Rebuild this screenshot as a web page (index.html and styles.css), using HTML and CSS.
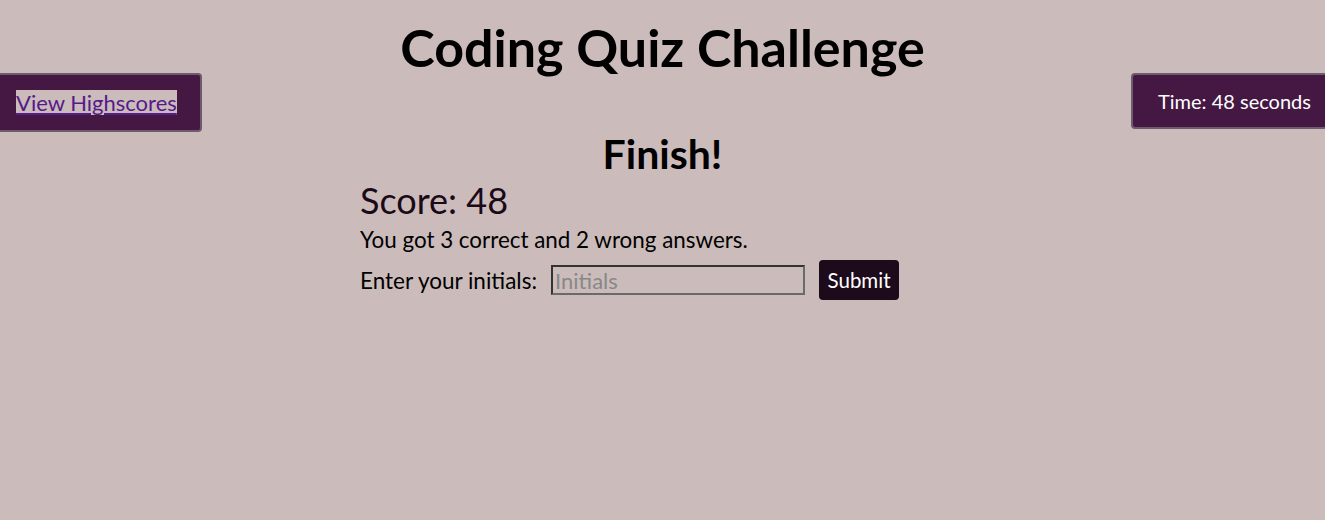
FILE: index.html
```html
<!DOCTYPE html>
<html>
<head>
<meta charset="utf-8">
<link rel="stylesheet" href="styles.css">
</head>
<body>
<h1 class="title">Coding Quiz Challenge</h1>
<div class="bar">
  <div class="scores-btn"><a href="#" class="scores-link">View Highscores</a></div>
  <div class="timer">Time: 48 seconds</div>
</div>
<main class="main">
  <h2 class="finish">Finish!</h2>
  <div class="result">
    <div class="score">Score: 48</div>
    <p class="summary">You got 3 correct and 2 wrong answers.</p>
    <form class="form">
      <label class="label" for="ini">Enter your initials:</label>
      <input class="input" id="ini" type="text" placeholder="Initials">
      <button class="submit" type="button">Submit</button>
    </form>
  </div>
</main>
</body>
</html>
```
FILE: styles.css
```css
html, body { margin: 0; padding: 0; }
body {
  background: #cbbbbb;
  font-family: "Lato", "DejaVu Sans", sans-serif;
  color: #000;
  height: 520px;
  overflow: hidden;
}
.title {
  margin: 0;
  padding-top: 19px;
  text-align: center;
  font-size: 52px;
  font-weight: 700;
  line-height: 56px;
}
.bar {
  display: flex;
  justify-content: space-between;
  align-items: flex-start;
  margin-top: -2px;
}
.scores-btn {
  background: #441843;
  border: 2px solid #6e5a6d;
  border-left: none;
  border-radius: 0 4px 4px 0;
  display: flex;
  align-items: center;
  padding-left: 16px;
  box-sizing: border-box;
  width: 202px;
  height: 59px;
}
.scores-link {
  background: #cbbbbb;
  color: #551a8b;
  font-size: 22px;
  line-height: 25px;
}
.timer {
  background: #441843;
  border: 2px solid #6e5a6d;
  border-right: none;
  border-radius: 4px 0 0 4px;
  color: #fff;
  font-size: 20px;
  height: 56px;
  box-sizing: border-box;
  width: 194px;
  display: flex;
  align-items: center;
  padding-left: 25px;
}
.main { display: flex; flex-direction: column; align-items: center; }
.finish {
  margin: 0;
  font-size: 41px;
  line-height: 44px;
  font-weight: 700;
}
.result {
  width: 606px;
  margin-left: 1px;
}
.score {
  font-size: 36px;
  line-height: 40px;
  color: #1a0a18;
  margin-top: 4px;
}
.summary {
  margin: 7px 0 0;
  font-size: 22.4px;
  line-height: 26px;
}
.form {
  display: flex;
  align-items: center;
  margin-top: 7px;
}
.label { font-size: 22.5px; }
.input {
  margin-left: 14px;
  width: 254px;
  height: 30px;
  box-sizing: border-box;
  background: #cbbbbb;
  border: 2px solid #6a6a6a;
  border-top-color: #333;
  border-left-color: #333;
  font-family: inherit;
  font-size: 22px;
  padding: 0 2px;
}
.input::placeholder { color: #888; }
.submit {
  margin-left: 14px;
  width: 80px;
  height: 40px;
  background: #1d0a1b;
  color: #fff;
  border: none;
  border-radius: 4px;
  font-family: inherit;
  font-size: 20.5px;
  font-weight: 400;
  padding: 0;
}
```
